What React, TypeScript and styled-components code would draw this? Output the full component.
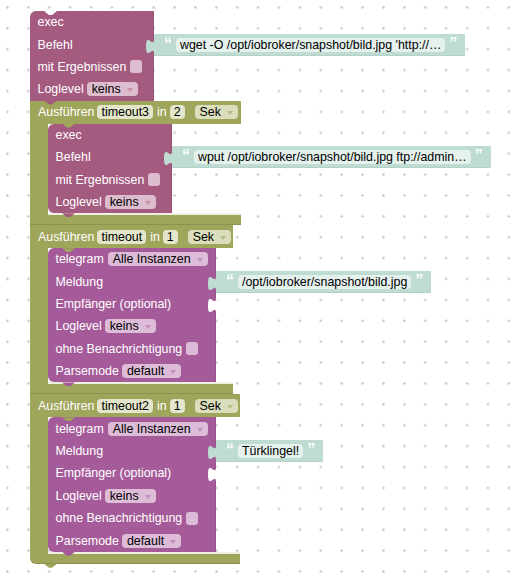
import React from "react";
import styled, { createGlobalStyle, css } from "styled-components";

const FONT = `"Liberation Sans", Arial, sans-serif`;
const ROW = 22.4;

type Theme = { body: string; field: string; drop: string; arrow: string };

const EXEC: Theme = { body: "#a55b80", field: "#dcbccd", drop: "#dcbccd", arrow: "#c48ea9" };
const TELE: Theme = { body: "#a55b99", field: "#dcbcd7", drop: "#dcbcd7", arrow: "#c48ebd" };
const GREEN: Theme = { body: "#9fa55b", field: "#e3e6cb", drop: "#dadebc", arrow: "#b8bd88" };
const TEXT_BG = "#bedcd2";
const TEXT_FIELD = "#e5f1ed";

const GlobalStyle = createGlobalStyle`
  html, body { margin: 0; padding: 0; background: #fff; }
  body { font-family: ${FONT}; }
`;

const Workspace = styled.div`
  width: 515px;
  height: 577px;
  box-sizing: border-box;
  overflow: hidden;
  padding: 11px 0 0 30px;
  background-color: #fff;
  background-image: radial-gradient(circle at center, #c8c8c8 0 0.9px, transparent 1.5px);
  background-size: 20.9px 20.9px;
  background-position: -3px -3px;
  display: flex;
  flex-direction: column;
  align-items: flex-start;
  font-family: ${FONT};
  font-size: 12.4px;
`;

const notch = css`
  clip-path: polygon(0 0, 100% 0, 62% 100%, 38% 100%);
`;

const Block = styled.div<{ $color: string; $width: number; $topRound?: boolean; $bottomRound?: boolean; $notched?: boolean }>`
  position: relative;
  width: ${(p) => p.$width}px;
  background: ${(p) => p.$color};
  border-radius: ${(p) => (p.$topRound ? "6px" : "0")} 0 0 ${(p) => (p.$bottomRound ? "6px" : "0")};
  box-shadow: inset -1px 0 rgba(0, 0, 0, 0.08);
  display: flex;
  flex-direction: column;
  &::after {
    content: "";
    position: absolute;
    left: 14px;
    top: 100%;
    width: 13px;
    height: 4px;
    background: ${(p) => p.$color};
    ${notch}
    z-index: 2;
  }
  ${(p) =>
    p.$notched &&
    css`
      &::before {
        content: "";
        position: absolute;
        left: 14px;
        top: 0;
        width: 13px;
        height: 4px;
        background: #fff;
        ${notch}
        z-index: 2;
      }
    `}
`;

const Row = styled.div`
  position: relative;
  height: ${ROW}px;
  display: flex;
  align-items: center;
  gap: 3px;
  padding-left: 7.5px;
  color: #fff;
  white-space: nowrap;
`;

const Label = styled.span<{ $ml?: number }>`
  color: #fff;
  margin-left: ${(p) => p.$ml ?? 0}px;
`;

const Field = styled.span<{ $bg: string; $ml?: number }>`
  display: inline-flex;
  align-items: center;
  height: 14px;
  line-height: 14px;
  padding: 0 4px;
  border-radius: 4px;
  background: ${(p) => p.$bg};
  color: #000;
  margin-left: ${(p) => p.$ml ?? 0}px;
  white-space: nowrap;
`;

const DropField = styled(Field)`
  padding: 0 5px;
  gap: 6px;
`;

const ArrowSvg = styled.svg`
  margin-top: 2px;
  flex-shrink: 0;
`;

const Check = styled.span<{ $bg: string }>`
  width: 12px;
  height: 13px;
  border-radius: 3px;
  background: ${(p) => p.$bg};
  margin-left: 1px;
`;

const Socket = styled.div`
  margin-left: auto;
  width: 0;
  align-self: stretch;
  position: relative;
  display: flex;
  align-items: center;
`;

const TabSvg = styled.svg`
  position: absolute;
  left: -8px;
  top: 0;
  z-index: 3;
`;

const ValueBlock = styled.div`
  position: relative;
  flex-shrink: 0;
  height: 22px;
  background: ${TEXT_BG};
  box-shadow: inset 0 -1px rgba(0, 0, 0, 0.05);
  display: flex;
  align-items: center;
  gap: 4px;
  padding: 0 8px 0 10px;
`;

const Quote = styled.span`
  align-self: flex-start;
  margin-top: 2px;
  color: #fff;
  font-family: ${FONT};
  font-weight: bold;
  font-size: 16px;
  line-height: 16px;
`;

const CBlock = styled.div`
  display: flex;
  flex-direction: column;
  position: relative;
`;

const CHeader = styled.div<{ $width: number }>`
  width: ${(p) => p.$width}px;
  height: 23px;
  box-sizing: border-box;
  background: ${GREEN.body};
  display: flex;
  align-items: center;
  gap: 3px;
  padding-left: 8px;
  color: #fff;
  white-space: nowrap;
`;

const Statement = styled.div`
  display: flex;
`;

const Arm = styled.div`
  width: 18px;
  flex-shrink: 0;
  background: ${GREEN.body};
`;

const Slot = styled.div`
  position: relative;
  &::before {
    content: "";
    position: absolute;
    left: 14px;
    top: 0;
    width: 13px;
    height: 4px;
    background: ${GREEN.body};
    ${notch}
    z-index: 3;
  }
`;

const CFooter = styled.div<{ $width: number; $last?: boolean }>`
  position: relative;
  width: ${(p) => p.$width}px;
  height: 12px;
  background: linear-gradient(${GREEN.body}, ${GREEN.body}) left top / 18px 100% no-repeat,
    linear-gradient(to bottom, #eef0e0 0 2px, ${GREEN.body} 2px);
  border-radius: 0 0 0 ${(p) => (p.$last ? "6px" : "0")};
  box-shadow: inset 0 -1px rgba(0, 0, 0, 0.12);
  &::after {
    content: "";
    position: absolute;
    left: 14px;
    top: 100%;
    width: 13px;
    height: 4px;
    background: ${GREEN.body};
    ${notch}
    z-index: 2;
  }
`;

function Arrow({ color }: { color: string }) {
  return (
    <ArrowSvg width="6" height="4" viewBox="0 0 6 4">
      <polygon points="0,0 6,0 3,4" fill={color} />
    </ArrowSvg>
  );
}

function Tab({ fill }: { fill: string }) {
  return (
    <TabSvg width="9" height="22" viewBox="0 0 9 22">
      <path d="M9,5 H8 C8,15 0,-3 0,12.5 C0,28 8,10 8,20 H9 Z" fill={fill} />
    </TabSvg>
  );
}

function Dropdown({ theme, text, ml }: { theme: Theme; text: string; ml?: number }) {
  return (
    <DropField $bg={theme.drop} $ml={ml}>
      {text}
      <Arrow color={theme.arrow} />
    </DropField>
  );
}

function TextValue({ text }: { text: string }) {
  return (
    <Socket>
      <ValueBlock>
        <Tab fill={TEXT_BG} />
        <Quote>“</Quote>
        <Field $bg={TEXT_FIELD}>{text}</Field>
        <Quote>”</Quote>
      </ValueBlock>
    </Socket>
  );
}

function EmptySocket() {
  return (
    <Socket>
      <Tab fill="#fff" />
    </Socket>
  );
}

function ExecBlock({ command, first }: { command: string; first?: boolean }) {
  return (
    <Block $color={EXEC.body} $width={124} $topRound $bottomRound={!first} $notched={first}>
      <Row>
        <Label>exec</Label>
      </Row>
      <Row>
        <Label>Befehl</Label>
        <TextValue text={command} />
      </Row>
      <Row>
        <Label>mit Ergebnissen</Label>
        <Check $bg={EXEC.field} />
      </Row>
      <Row>
        <Label>Loglevel</Label>
        <Dropdown theme={EXEC} text="keins" />
      </Row>
    </Block>
  );
}

function TelegramBlock({ message }: { message: string }) {
  return (
    <Block $color={TELE.body} $width={168} $topRound $bottomRound>
      <Row>
        <Label>telegram</Label>
        <Dropdown theme={TELE} text="Alle Instanzen" ml={1} />
      </Row>
      <Row>
        <Label>Meldung</Label>
        <TextValue text={message} />
      </Row>
      <Row>
        <Label>Empfänger (optional)</Label>
        <EmptySocket />
      </Row>
      <Row>
        <Label>Loglevel</Label>
        <Dropdown theme={TELE} text="keins" />
      </Row>
      <Row>
        <Label>ohne Benachrichtigung</Label>
        <Check $bg={TELE.field} />
      </Row>
      <Row>
        <Label>Parsemode</Label>
        <Dropdown theme={TELE} text="default" />
      </Row>
    </Block>
  );
}

function TimeoutBlock({
  name,
  delay,
  width,
  last,
  children,
}: {
  name: string;
  delay: string;
  width: number;
  last?: boolean;
  children: React.ReactNode;
}) {
  return (
    <CBlock>
      <CHeader $width={width}>
        <Label>Ausführen</Label>
        <Field $bg={GREEN.field}>{name}</Field>
        <Label $ml={1}>in</Label>
        <Field $bg={GREEN.field}>{delay}</Field>
        <Dropdown theme={GREEN} text="Sek" ml={7} />
      </CHeader>
      <Statement>
        <Arm />
        <Slot>{children}</Slot>
      </Statement>
      <CFooter $width={width} $last={last} />
    </CBlock>
  );
}

export default function App() {
  return (
    <>
      <GlobalStyle />
      <Workspace>
        <ExecBlock first command="wget -O /opt/iobroker/snapshot/bild.jpg 'http://…" />
        <TimeoutBlock name="timeout3" delay="2" width={211}>
          <ExecBlock command="wput /opt/iobroker/snapshot/bild.jpg ftp://admin…" />
        </TimeoutBlock>
        <TimeoutBlock name="timeout" delay="1" width={203}>
          <TelegramBlock message="/opt/iobroker/snapshot/bild.jpg" />
        </TimeoutBlock>
        <TimeoutBlock name="timeout2" delay="1" width={210} last>
          <TelegramBlock message="Türklingel!" />
        </TimeoutBlock>
      </Workspace>
    </>
  );
}
